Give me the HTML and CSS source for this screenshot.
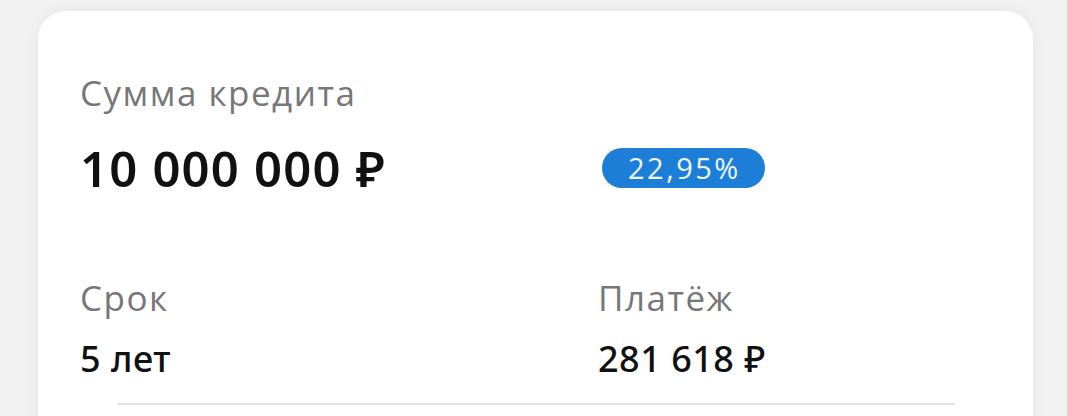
FILE: index.html
```html
<!DOCTYPE html>
<html lang="ru">
<head>
<meta charset="utf-8">
<link rel="stylesheet" href="styles.css">
</head>
<body>
<div class="card">
  <div class="label">Сумма кредита</div>
  <div class="amount-row">
    <div class="amount">10 000 000 ₽</div>
    <div class="badge">22,95%</div>
  </div>
  <div class="details">
    <div class="item">
      <div class="label">Срок</div>
      <div class="value">5 лет</div>
    </div>
    <div class="item">
      <div class="label">Платёж</div>
      <div class="value">281 618 ₽</div>
    </div>
  </div>
  <div class="divider"></div>
</div>
</body>
</html>
```

FILE: styles.css
```css
html, body {
  margin: 0;
  padding: 0;
}
body {
  background: #f1f1f1;
  font-family: "Open Sans", "Noto Sans", sans-serif;
  height: 416px;
  overflow: hidden;
  padding: 11px 34px 0 38px;
  box-sizing: border-box;
}
.card {
  background: #fff;
  border-radius: 28px;
  box-shadow: 0 0 14px rgba(0,0,0,0.05);
  padding: 62px 0 0 42px;
  height: 440px;
  box-sizing: border-box;
}
.label {
  color: #777;
  font-size: 35px;
  line-height: 40px;
  letter-spacing: 1.5px;
}
.amount-row {
  display: grid;
  grid-template-columns: 522px auto;
  align-items: center;
  margin-top: 22px;
  height: 50px;
}
.amount {
  font-family: "Noto Sans", "Open Sans", sans-serif;
  font-size: 49px;
  font-weight: 600;
  color: #111;
  letter-spacing: 1.2px;
}
.badge {
  justify-self: start;
  background: #1c7ed6;
  color: #eef6ff;
  font-size: 29px;
  letter-spacing: 2.5px;
  line-height: 40px;
  height: 40px;
  padding: 0 24px 0 26px;
  border-radius: 20px;
}
.details {
  display: grid;
  grid-template-columns: 518px auto;
  margin-top: 93px;
}
.value {
  font-family: "Noto Sans", "Open Sans", sans-serif;
  font-size: 36px;
  font-weight: 500;
  color: #111;
  letter-spacing: 0.5px;
  margin-top: 21px;
  line-height: 40px;
}
.divider {
  margin: 24px 78px 0 38px;
  height: 2px;
  background: #e2e2e2;
}
```
